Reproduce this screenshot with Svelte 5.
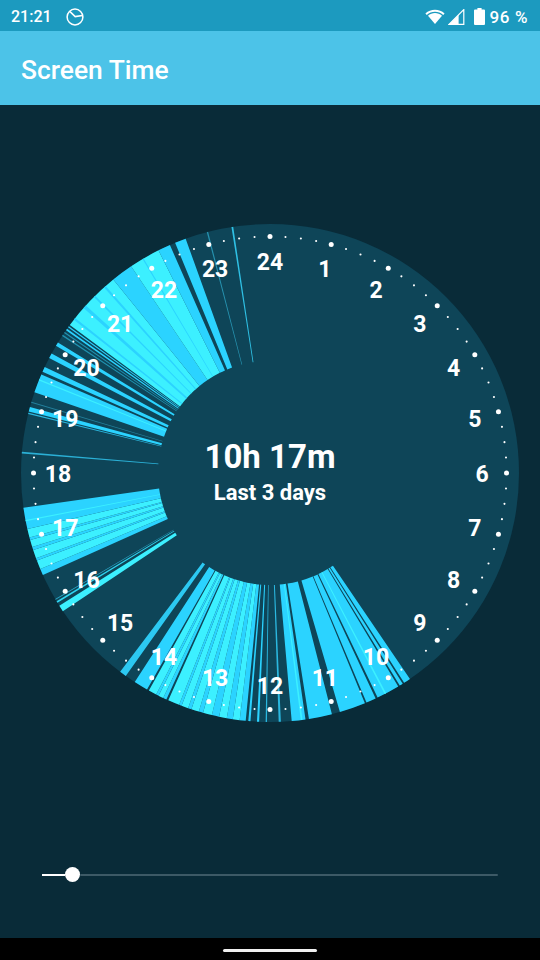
<script>
  const C = '#2bd3ff';
  const B = '#3cf0ff';
  const D = '#0e4558';
  const cx = 250, cy = 250, ri = 112, ro = 249;

  // [start angle, end angle, colour], clockwise degrees from 12 o'clock on a 24h dial
  const wedges = [
    [145.8, 147.4, C], [147.8, 148.6, C], [149, 154.4, C], [152.2, 152.6, B],
    [154.9, 157.2, C], [157.6, 163.7, C], [165.6, 171, C], [171.8, 175, C], [172.5, 172.9, B],
    [177.5, 178, '#2bb8e0'], [180.7, 181, '#2bb8e0'], [182.5, 183, C], [184.5, 185, C],
    [185.6, 187, C], [187, 188.6, B], [188.6, 190, C], [190, 191.8, B], [191.8, 193.5, C],
    [193.5, 195.6, B], [195.6, 196.6, C], [196.6, 198.4, B], [198.4, 199.2, C], [199.2, 200.8, B],
    [200.8, 201.4, C], [201.4, 204.1, B],
    [204.6, 205.4, C], [205.4, 206.6, B], [206.6, 207.2, C], [207.2, 209.1, B],
    [209.6, 212.9, C], [215.4, 217, '#2cc9f2'],
    [236.3, 237.8, B], [238.6, 239, '#2fd4f0'], [239.4, 239.6, '#2aa8c8'],
    [245.8, 247.3, C], [247.3, 249.4, B], [249.4, 250, C], [250, 252, B], [252, 252.7, C],
    [252.7, 254.4, B], [254.4, 255, C], [255, 257, B],
    [257, 262, C], [258.8, 259.1, B],
    [274.5, 274.9, '#2bb0d6'],
    [283.7, 284, '#2bb8e0'], [284.3, 285.4, C], [286.4, 286.6, '#23809c'],
    [288.9, 293.3, C], [291.8, 292.1, B], [294, 295.2, C], [297.5, 298.7, C], [300.7, 301.6, C],
    [303.4, 303.7, '#2092b0'], [304.2, 304.5, '#2092b0'], [305, 305.4, C], [305.8, 306.1, C],
    [306.5, 321, B], [308, 308.5, C], [311.5, 312.3, C], [315, 315.4, C],
    [318.2, 318.7, C],
    [321, 326.1, C], [326.1, 333.4, B], [329.2, 329.5, C], [333.4, 336.3, C],
    [337.6, 340.2, C], [345.3, 345.6, '#2691ae'], [351.1, 351.5, '#2fc0e4']
  ];

  function pt(a, r) {
    const t = (a * Math.PI) / 180;
    return `${(cx + r * Math.sin(t)).toFixed(2)} ${(cy - r * Math.cos(t)).toFixed(2)}`;
  }
  function sector(a, b) {
    return `M${pt(a, ri)} L${pt(a, ro)} A${ro} ${ro} 0 0 1 ${pt(b, ro)} L${pt(b, ri)} A${ri} ${ri} 0 0 0 ${pt(a, ri)} Z`;
  }
  function xy(a, r) {
    const t = (a * Math.PI) / 180;
    return { x: cx + r * Math.sin(t), y: cy - r * Math.cos(t) };
  }

  const dots = Array.from({ length: 96 }, (_, i) => ({ ...xy(i * 3.75, 236.5), big: i % 4 === 0 }));
  const labels = Array.from({ length: 24 }, (_, i) => ({ ...xy((i + 1) * 15, 212), text: String(i + 1) }));
</script>

<div class="screen">
  <header class="status">
    <div class="status-left">
      <span>21:21</span>
      <svg width="18" height="18" viewBox="0 0 18 18" fill="none" stroke="#fff" stroke-width="1.5">
        <circle cx="9" cy="9" r="7.9" />
        <path d="M4 3.6 L9.2 8.6 L16.4 7.4" />
      </svg>
    </div>
    <div class="status-right">
      <svg width="20" height="16" viewBox="0 0 20 16" fill="#fff">
        <path d="M0.4 4.4 C5.6 -0.6 14.4 -0.6 19.6 4.4 L18.2 5.9 C13.6 1.6 6.4 1.6 1.8 5.9 Z" />
        <path d="M3 6.8 C7 3.2 13 3.2 17 6.8 L10 15 Z" />
      </svg>
      <svg class="signal" width="17" height="16" viewBox="0 0 17 16">
        <path d="M1 15.4 L15.8 0.6 V15.4 Z" fill="none" stroke="#fff" stroke-width="1.2" />
        <path d="M1 15.4 L10.6 5.8 V15.4 Z" fill="#fff" />
      </svg>
      <svg class="battery" width="11" height="17" viewBox="0 0 11 17" fill="#fff">
        <path d="M3.4 0 H7.6 V1.6 H10 A1 1 0 0 1 11 2.6 V16 A1 1 0 0 1 10 17 H1 A1 1 0 0 1 0 16 V2.6 A1 1 0 0 1 1 1.6 H3.4 Z" />
      </svg>
      <span class="pct">96 %</span>
    </div>
  </header>

  <div class="appbar">Screen Time</div>

  <main class="content">
    <div class="dial">
      <svg width="500" height="500" viewBox="0 0 500 500">
        <circle cx={cx} cy={cy} r={ro} fill={D} />
        {#each wedges as w}
          <path d={sector(w[0], w[1])} fill={w[2]} />
        {/each}
        {#each dots as d}
          <circle cx={d.x} cy={d.y} r={d.big ? 2.5 : 1.05} fill="#fff" />
        {/each}
        {#each labels as l}
          <text class="hour" x={l.x} y={l.y + 8.5}>{l.text}</text>
        {/each}
      </svg>
      <div class="center">
        <div class="total">10h 17m</div>
        <div class="range">Last 3 days</div>
      </div>
    </div>

    <div class="slider">
      <div class="fill"></div>
      <div class="thumb"></div>
      <div class="rest"></div>
    </div>
  </main>

  <footer class="nav"><div class="handle"></div></footer>
</div>

<style>
  :global(body) {
    margin: 0;
    background: #092b38;
  }
  .screen {
    width: 540px;
    height: 960px;
    display: flex;
    flex-direction: column;
    font-family: Roboto, "Liberation Sans", sans-serif;
    color: #fff;
    overflow: hidden;
  }
  .status {
    height: 31px;
    background: #1c9abf;
    display: flex;
    align-items: center;
    justify-content: space-between;
    padding: 2px 12px 0 11px;
    box-sizing: border-box;
    font-size: 16px;
    font-weight: 500;
  }
  .status-left {
    display: flex;
    align-items: center;
    gap: 14px;
  }
  .status-right {
    display: flex;
    align-items: center;
  }
  .signal {
    margin-left: 3px;
  }
  .battery {
    margin-left: 9px;
  }
  .pct {
    margin-left: 5px;
    font-size: 17px;
    letter-spacing: 0.6px;
  }
  .appbar {
    height: 74px;
    background: #4cc3e8;
    display: flex;
    align-items: center;
    padding: 3px 0 0 21px;
    box-sizing: border-box;
    font-size: 26.4px;
    font-weight: 500;
  }
  .content {
    flex: 1;
    background: #092b38;
    display: flex;
    flex-direction: column;
    align-items: center;
  }
  .dial {
    position: relative;
    width: 500px;
    height: 500px;
    margin-top: 118px;
  }
  .dial svg {
    display: block;
  }
  .hour {
    fill: #fff;
    font-size: 23px;
    font-weight: 700;
    text-anchor: middle;
  }
  .center {
    position: absolute;
    left: 0;
    right: 0;
    top: 214px;
    text-align: center;
  }
  .total {
    font-size: 33px;
    font-weight: 700;
    line-height: 39px;
  }
  .range {
    font-size: 22px;
    font-weight: 700;
    line-height: 24px;
    margin-top: 5px;
  }
  .slider {
    margin-top: 144px;
    width: 456px;
    height: 15px;
    display: flex;
    align-items: center;
  }
  .fill {
    width: 23px;
    height: 2px;
    background: #fff;
  }
  .thumb {
    width: 15px;
    height: 15px;
    border-radius: 50%;
    background: #fff;
  }
  .rest {
    flex: 1;
    height: 2px;
    background: #3d5a66;
    border-radius: 1px;
  }
  .nav {
    height: 22px;
    background: #000;
    display: flex;
    justify-content: center;
    padding-top: 11px;
    box-sizing: border-box;
  }
  .handle {
    width: 94px;
    height: 3px;
    background: #f0f0f0;
    border-radius: 1.5px;
  }
</style>
